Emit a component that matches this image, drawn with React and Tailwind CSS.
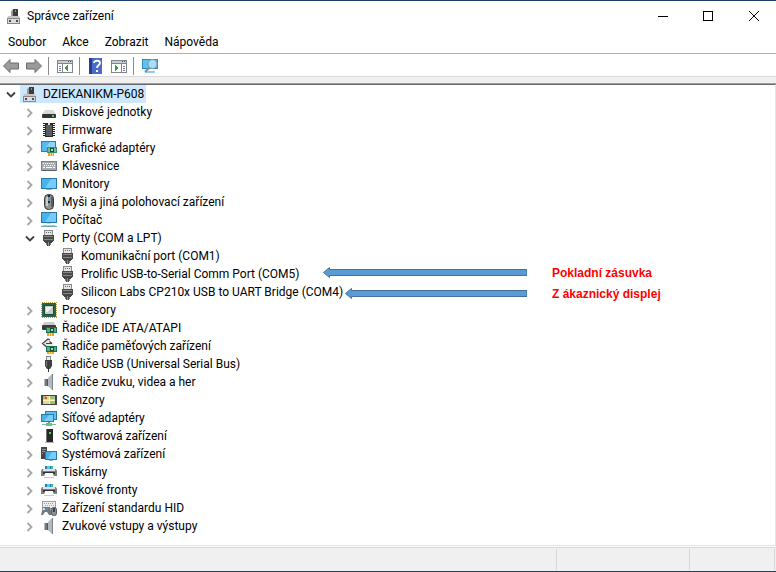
import { useState } from "react";

function Svg({ children, crisp }) {
  return (
    <svg
      width="16"
      height="16"
      viewBox="0 0 16 16"
      className="shrink-0"
      shapeRendering={crisp ? "crispEdges" : "auto"}
      aria-hidden="true"
    >
      {children}
    </svg>
  );
}

function ComputerIcon() {
  return (
    <Svg>
      <path d="M5 3l3-2v8H5z" fill="#9a9a9a" />
      <path d="M7 1h5v8H7z" fill="#3b3b3b" />
      <rect x="9" y="2" width="1" height="2" fill="#35d23c" />
      <path d="M2 8h11l1 3H1z" fill="#c9c6c9" />
      <rect x="1" y="10" width="13" height="6" fill="#8b878b" />
      <rect x="2" y="11" width="11" height="4" fill="#dedcde" />
      <rect x="3" y="12" width="2" height="2" fill="#4c484c" />
      <rect x="10" y="12" width="2" height="2" fill="#4c484c" />
    </Svg>
  );
}

function DiskIcon() {
  return (
    <Svg>
      <path d="M4 6h8l3 4H1z" fill="#d8d8d8" />
      <rect x="1" y="10" width="14" height="4" rx="1" fill="#333" />
      <rect x="11" y="11" width="2" height="2" fill="#35e545" />
    </Svg>
  );
}

function FirmwareIcon() {
  return (
    <Svg crisp>
      <path d="M2 1h12v1H2zM2 3h12v1H2zM2 5h12v1H2zM2 7h12v1H2zM2 9h12v1H2zM2 11h12v1H2zM2 13h12v1H2z" fill="#222" />
      <rect x="4" y="1" width="8" height="14" fill="#2b2b2b" />
      <rect x="5" y="3" width="6" height="11" fill="#5d5d5d" />
      <rect x="7" y="1" width="2" height="2" fill="#ddd" />
    </Svg>
  );
}

function GraphicsIcon() {
  return (
    <Svg>
      <rect x="0" y="1" width="15" height="11" fill="#2383b8" />
      <path d="M1 2h13v9H1z" fill="#55b9f0" />
      <path d="M9 2h5v5H5z" fill="#8bd5fb" />
      <path d="M6 7h10v6H6z" fill="#3c8f6b" />
      <path d="M7 8h8v4H7z" fill="#6dbb96" />
      <path d="M9 8h4v4H9z" fill="#1c4d3b" />
      <rect x="10" y="9" width="2" height="2" fill="#b7d4c6" />
      <path d="M7 13h6v3H7z" fill="#e9a51b" />
      <path d="M9 13h1v3H9zM11 13h1v3h-1z" fill="#f6d27a" />
    </Svg>
  );
}

function KeyboardIcon() {
  return (
    <Svg crisp>
      <rect x="0" y="3" width="16" height="10" fill="#7c8388" />
      <rect x="1" y="4" width="14" height="8" fill="#a5abaf" />
      <path d="M2 5.500h12" stroke="#fff" strokeDasharray="1 1" />
      <path d="M3 7.500h11" stroke="#fff" strokeDasharray="1 1" />
      <path d="M2 9.500h2M5 9.500h6M12 9.500h2" stroke="#fff" />
      <path d="M1 12h14v1H1z" fill="#555c61" />
    </Svg>
  );
}

function MonitorIcon() {
  return (
    <Svg>
      <rect x="0" y="2" width="16" height="11" fill="#2779a7" />
      <rect x="1" y="3" width="14" height="9" fill="#46b3ef" />
      <path d="M10 3h5v9H4z" fill="#78cbf8" />
      <rect x="5" y="13" width="6" height="1" fill="#8eb7ce" />
    </Svg>
  );
}

function MouseIcon() {
  return (
    <Svg>
      <rect x="3.500" y="0.500" width="9" height="15" rx="4" fill="#8d9195" stroke="#34373a" />
      <path d="M5 3h2v9H5z" fill="#c5cacd" />
      <path d="M10 3h2v10h-2z" fill="#5a5e62" />
      <rect x="7" y="1" width="2" height="8" fill="#25282b" />
      <rect x="7" y="3" width="2" height="4" fill="#6b8fb5" />
    </Svg>
  );
}

function PcIcon() {
  return (
    <Svg>
      <rect x="0" y="0" width="16" height="11" fill="#2779a7" />
      <rect x="1" y="1" width="14" height="9" fill="#46b3ef" />
      <path d="M10 1h5v9H4z" fill="#78cbf8" />
      <path d="M6 11h4v1H6z" fill="#b9d9e9" />
      <path d="M2 13h12l2 2H0z" fill="#a9cde0" />
      <path d="M0 14h16v1H0z" fill="#6ba8c8" />
    </Svg>
  );
}

function PortIcon() {
  return (
    <Svg crisp>
      <rect x="3" y="0" width="9" height="5" fill="#8a8a8a" />
      <rect x="4" y="1" width="7" height="4" fill="#e6e6e6" />
      <path d="M5 2h1v1H5zM7 2h1v1H7zM9 2h1v1H9z" fill="#666" />
      <path d="M2 5h11v6H2z" fill="#4a4a4a" />
      <path d="M3 6h9v1H3zM3 9h9v1H3z" fill="#858585" />
      <path d="M3 11h9v1H3zM4 12h7v1H4z" fill="#444" />
      <path d="M5 13h1v2H5zM9 13h1v2H9z" fill="#777" />
      <path d="M6 13h3v3H6z" fill="#4b4b4b" />
      <path d="M7 12h1v4H7z" fill="#8a8a8a" />
    </Svg>
  );
}

function CpuIcon() {
  return (
    <Svg crisp>
      <rect x="1" y="1" width="14" height="14" fill="#2e6247" />
      <rect x="0.500" y="0.500" width="15" height="15" fill="none" stroke="#b99b4c" strokeDasharray="1 1" />
      <rect x="3" y="3" width="10" height="10" fill="#1d4b34" />
      <rect x="4" y="4" width="8" height="8" fill="#c5cdca" />
      <path d="M5 5h6v1h-1v1H9v1H8v1H7v1H5z" fill="#eef1ef" />
    </Svg>
  );
}

function IdeIcon() {
  return (
    <Svg>
      <path d="M3 2h10l2 4H1z" fill="#ccc" />
      <rect x="1" y="5" width="14" height="5" rx="1" fill="#3a3a3a" />
      <path d="M5 7h11v6H5z" fill="#17704c" />
      <path d="M6 8h9v4H6z" fill="#55b08a" />
      <path d="M9 8h4v4H9z" fill="#174b38" />
      <rect x="10" y="9" width="2" height="2" fill="#b7d4c6" />
      <path d="M6 13h7v3H6z" fill="#e9a51b" />
      <path d="M8 13h1v3H8zM10 13h1v3h-1z" fill="#f6d27a" />
    </Svg>
  );
}

function StorageIcon() {
  return (
    <Svg>
      <path d="M6 1l7 5-6 5-6-5z" fill="#e6e6e6" />
      <path d="M9 2L7 1 1.500 5.500 7 10M5 5.500h6M8.500 3.500L11 5.500" fill="none" stroke="#444" strokeWidth="1.200" />
      <path d="M5 8h11v6H5z" fill="#17704c" />
      <path d="M6 9h9v4H6z" fill="#55b08a" />
      <path d="M9 9h4v4H9z" fill="#174b38" />
      <rect x="10" y="10" width="2" height="2" fill="#b7d4c6" />
      <path d="M6 14h7v2H6z" fill="#e9a51b" />
      <path d="M8 14h1v2H8zM10 14h1v2h-1z" fill="#f6d27a" />
    </Svg>
  );
}

function UsbIcon() {
  return (
    <Svg>
      <rect x="5" y="0" width="5" height="5" fill="#888" />
      <rect x="6" y="1" width="3" height="3" fill="#eee" />
      <path d="M4 4h7v6l-2 3H6l-2-3z" fill="#3f3f3f" />
      <path d="M5 5h1v5H5z" fill="#818181" />
      <path d="M7 12h1v4H7z" fill="#333" />
    </Svg>
  );
}

function SpeakerIcon() {
  return (
    <Svg>
      <path d="M3 5h4v7H3z" fill="#6f7a84" />
      <path d="M3 5h1v7H3z" fill="#b4bdc4" />
      <path d="M7 4l4-4v16l-4-4z" fill="#b3b9bd" />
      <path d="M11 0h1v16h-1z" fill="#7d858b" />
      <path d="M6 5h1v7H6z" fill="#4e575f" />
    </Svg>
  );
}

function SensorIcon() {
  return (
    <Svg crisp>
      <rect x="0" y="3" width="16" height="10" fill="#444" />
      <rect x="2" y="4" width="12" height="8" fill="#e8d58a" />
      <path d="M2 4h3v3H2zM9 4h5v3H9zM9 9h5v3H9z" fill="#9bc178" />
      <path d="M2 8h12v1H2zM8 4h1v8H8z" fill="#fff5bd" />
      <rect x="4" y="5" width="2" height="2" fill="#d9532f" />
    </Svg>
  );
}

function NetworkIcon() {
  return (
    <Svg>
      <rect x="4" y="1" width="12" height="9" fill="#277daa" />
      <rect x="5" y="2" width="10" height="7" fill="#5fc0f4" />
      <rect x="0" y="4" width="13" height="8" fill="#277daa" />
      <rect x="1" y="5" width="11" height="6" fill="#47b2ed" />
      <path d="M8 5h4v6H3z" fill="#7acdf8" />
      <path d="M7 12h2v2H7z" fill="#51a872" />
      <path d="M1 14h14v1H1z" fill="#77c292" />
      <rect x="5" y="13" width="6" height="3" fill="#6fbd8b" />
    </Svg>
  );
}

function SoftwareIcon() {
  return (
    <Svg>
      <path d="M5 1h7v13H5z" fill="#282828" />
      <path d="M5 1h1v13H5z" fill="#777" />
      <path d="M4 14h9v1H4z" fill="#b3b3b3" />
      <rect x="8" y="4" width="2" height="2" fill="#40df4c" />
    </Svg>
  );
}

function SystemIcon() {
  return (
    <Svg>
      <rect x="0" y="1" width="6" height="12" fill="#454545" />
      <path d="M1 3h4v1H1zM1 5h4v1H1z" fill="#999" />
      <rect x="1" y="7" width="1" height="1" fill="#41dd4d" />
      <rect x="4" y="5" width="12" height="9" fill="#2779a7" />
      <rect x="5" y="6" width="10" height="7" fill="#46b3ef" />
      <path d="M11 6h4v7H7z" fill="#78cbf8" />
      <path d="M8 14h4v1H8z" fill="#8eb7ce" />
    </Svg>
  );
}

function PrinterIcon() {
  return (
    <Svg>
      <path d="M4 2h8v3H4z" fill="#227eb9" />
      <path d="M6 2h3v3H6z" fill="#56c7f3" />
      <path d="M10 2h2v3h-2z" fill="#42c37b" />
      <path d="M1 5h14l1 2v5H0V7z" fill="#7b8083" />
      <path d="M2 5h12v2H2z" fill="#dfe1e2" />
      <path d="M2 8h12v2H2z" fill="#303335" />
      <path d="M4 9h8l1 5H3z" fill="#fff" />
      <path d="M3 13h10v1H3z" fill="#c9cccd" />
    </Svg>
  );
}

function HidIcon() {
  return (
    <Svg>
      <rect x="1" y="1" width="14" height="8" fill="#9a9fa3" />
      <rect x="2" y="2" width="12" height="6" fill="#eceeef" />
      <path d="M3 3.500h10M4 5.500h9" stroke="#9a9fa3" strokeDasharray="1 1" />
      <path d="M2 7h7l2 8H8l-2-3H4l-2 3H0z" fill="#74797d" />
      <rect x="2" y="8" width="2" height="2" fill="#d9dee1" />
      <rect x="5" y="8" width="2" height="2" fill="#3c9bd6" />
      <rect x="10.500" y="7.500" width="5" height="8" rx="2" fill="#8c9195" stroke="#555a5e" />
      <rect x="12" y="8" width="2" height="4" fill="#3b3f43" />
    </Svg>
  );
}

const devices = [
  { name: "Diskové jednotky", icon: DiskIcon },
  { name: "Firmware", icon: FirmwareIcon },
  { name: "Grafické adaptéry", icon: GraphicsIcon },
  { name: "Klávesnice", icon: KeyboardIcon },
  { name: "Monitory", icon: MonitorIcon },
  { name: "Myši a jiná polohovací zařízení", icon: MouseIcon },
  { name: "Počítač", icon: PcIcon },
  {
    name: "Porty (COM a LPT)",
    icon: PortIcon,
    children: [
      "Komunikační port (COM1)",
      "Prolific USB-to-Serial Comm Port (COM5)",
      "Silicon Labs CP210x USB to UART Bridge (COM4)",
    ],
  },
  { name: "Procesory", icon: CpuIcon },
  { name: "Řadiče IDE ATA/ATAPI", icon: IdeIcon },
  { name: "Řadiče paměťových zařízení", icon: StorageIcon },
  { name: "Řadiče USB (Universal Serial Bus)", icon: UsbIcon },
  { name: "Řadiče zvuku, videa a her", icon: SpeakerIcon },
  { name: "Senzory", icon: SensorIcon },
  { name: "Síťové adaptéry", icon: NetworkIcon },
  { name: "Softwarová zařízení", icon: SoftwareIcon },
  { name: "Systémová zařízení", icon: SystemIcon },
  { name: "Tiskárny", icon: PrinterIcon },
  { name: "Tiskové fronty", icon: PrinterIcon },
  { name: "Zařízení standardu HID", icon: HidIcon },
  { name: "Zvukové vstupy a výstupy", icon: SpeakerIcon },
];

function Chevron({ open, label, onClick }) {
  return (
    <button
      onClick={onClick}
      aria-label={label}
      aria-expanded={open}
      className="w-4 h-[18px] pt-[2px] flex items-center justify-center shrink-0"
    >
      <svg width="10" height="10" viewBox="0 0 10 10" fill="none" strokeWidth="1.8" aria-hidden="true">
        {open ? (
          <path d="M1 2.500l4 4 4-4" stroke="#404040" />
        ) : (
          <path d="M2.500 1l4 4-4 4" stroke="#a6a6a6" />
        )}
      </svg>
    </button>
  );
}

function TitleBar() {
  return (
    <header className="flex items-center h-[30px] pl-[6px]">
      <ComputerIcon />
      <h1 className="ml-[5px] flex-1">Správce zařízení</h1>
      <button aria-label="Minimalizovat" className="w-[45px] h-full flex items-center justify-center">
        <svg width="10" height="11" shapeRendering="crispEdges"><path d="M0 5h10v1H0z" /></svg>
      </button>
      <button aria-label="Maximalizovat" className="w-[46px] h-full flex items-center justify-center">
        <svg width="10" height="10" shapeRendering="crispEdges">
          <path d="M.5.5h9v9h-9z" fill="none" stroke="#000" />
        </svg>
      </button>
      <button aria-label="Zavřít" className="w-[45px] h-full flex items-center justify-center">
        <svg width="10" height="10"><path d="M0 0l10 10M10 0L0 10" stroke="#000" /></svg>
      </button>
    </header>
  );
}

function Separator() {
  return <div className="w-px h-[18px] bg-[#8c8c8c] shrink-0" />;
}

function ArrowIcon({ flip }) {
  return (
    <Svg>
      <path
        d={flip ? "M15.500 8L9 1.500V5H.5v6H9v3.500z" : "M.5 8L7 1.500V5h8.500v6H7v3.500z"}
        fill="#9b9b9b"
        stroke="#6b6b6b"
      />
    </Svg>
  );
}

function PaneIcon({ flip }) {
  return (
    <Svg crisp>
      <rect x="0" y="2" width="16" height="13" fill="#80868b" />
      <rect x="1" y="3" width="14" height="2" fill="#c7cdd2" />
      <path d="M11 3h1v1h-1zM13 3h1v1h-1z" fill="#555" />
      <rect x="1" y="6" width="14" height="8" fill="#fff" />
      {flip ? (
        <>
          <path d="M10 6h1v8h-1z" fill="#80868b" />
          <path d="M12 8h2v1h-2zM12 10h2v1h-2zM12 12h2v1h-2z" fill="#6f7880" />
          <path d="M4 7l4 3-4 3z" fill="#2ca52f" />
        </>
      ) : (
        <>
          <path d="M5 6h1v8H5z" fill="#80868b" />
          <path d="M2 8h2v1H2zM2 10h2v1H2zM2 12h2v1H2z" fill="#6f7880" />
          <path d="M11 7l-4 3 4 3z" fill="#2ca52f" />
        </>
      )}
    </Svg>
  );
}

function HelpIcon() {
  return (
    <Svg>
      <rect x="1" y="0" width="13" height="16" fill="#4a6cc6" />
      <rect x="1" y="0" width="3" height="16" fill="#223f91" />
      <path d="M6 5c0-3 6-3 6 0 0 2-3 2-3 5" fill="none" stroke="#fff" strokeWidth="1.800" />
      <rect x="8" y="12" width="2" height="2" fill="#fff" />
    </Svg>
  );
}

function ScanIcon() {
  return (
    <Svg>
      <rect x="0" y="1" width="16" height="10" fill="#2b8cc0" />
      <rect x="1" y="2" width="14" height="8" fill="#5fc0f2" />
      <path d="M3 13h10v2H3z" fill="#9cc9e0" />
      <path d="M8 9l-5 5" stroke="#6f95ab" strokeWidth="2" />
      <circle cx="10.500" cy="6" r="4.500" fill="#a9ddf8" stroke="#7d98a8" />
    </Svg>
  );
}

function Toolbar() {
  return (
    <div className="flex items-center h-[22px] pt-[2px] pl-[3px]">
      <button aria-label="Zpět"><ArrowIcon /></button>
      <button aria-label="Vpřed" className="ml-[7px] mr-[6px]"><ArrowIcon flip /></button>
      <Separator />
      <button aria-label="Strom konzoly" className="ml-2 mr-[6px]"><PaneIcon /></button>
      <Separator />
      <button aria-label="Nápověda" className="ml-2"><HelpIcon /></button>
      <button aria-label="Podokno akcí" className="ml-[7px] mr-[6px]"><PaneIcon flip /></button>
      <Separator />
      <button aria-label="Vyhledat změny hardwaru" className="ml-2"><ScanIcon /></button>
    </div>
  );
}

function Note({ width, children }) {
  return (
    <div className="flex items-center h-[21px]">
      <div className="w-[204px] flex justify-end">
        <svg width={width} height="11" aria-hidden="true">
          <path
            d={`M.5 5.500l6-5v2H${width}v6H6.500v2z`}
            fill="#5b9bd5"
            stroke="#41719c"
          />
        </svg>
      </div>
      <p className="ml-[25px] font-['Liberation_Sans',sans-serif] font-bold text-[12px] text-[#ff0000]">
        {children}
      </p>
    </div>
  );
}

function DeviceTree() {
  const [rootOpen, setRootOpen] = useState(true);
  const [open, setOpen] = useState(["Porty (COM a LPT)"]);

  const toggle = (name) => {
    setOpen((prev) =>
      prev.includes(name) ? prev.filter((n) => n !== name) : [...prev, name]
    );
  };

  return (
    <main className="relative flex-1 border-t border-t-[#696969] border-r border-r-[#e3e3e3] border-b border-b-[#e3e3e3]">
      <div className="flex items-center h-[18px] pl-[3px]">
        <Chevron open={rootOpen} label="DZIEKANIKM-P608" onClick={() => setRootOpen(!rootOpen)} />
        <div className="flex items-center h-[18px] ml-px pl-[2px] pr-[2px] gap-[5px] bg-[#cce8ff]">
          <ComputerIcon />
          DZIEKANIKM-P608
        </div>
      </div>

      {rootOpen && (
        <ul>
          {devices.map(({ name, icon: Icon, children }) => (
            <li key={name}>
              <div className="flex items-center h-[18px] pl-[22px]">
                <Chevron open={open.includes(name)} label={name} onClick={() => toggle(name)} />
                <div className="flex items-center ml-[3px] gap-[5px]">
                  <Icon />
                  {name}
                </div>
              </div>
              {children && open.includes(name) && (
                <ul>
                  {children.map((child) => (
                    <li key={child} className="flex items-center h-[18px] pl-[60px] gap-[5px]">
                      <PortIcon />
                      {child}
                    </li>
                  ))}
                </ul>
              )}
            </li>
          ))}
        </ul>
      )}

      {/* callouts over the COM ports */}
      <div className="absolute left-[323px] top-[177px]">
        <Note width={204}>Pokladní zásuvka</Note>
        <Note width={182}>Z ákaznický displej</Note>
      </div>
    </main>
  );
}

function App() {
  return (
    <div className="min-h-screen flex flex-col bg-white text-black font-['Roboto','Open_Sans',sans-serif] text-[12px] leading-[18px] whitespace-nowrap border-t border-t-[#1b4068] border-b border-b-[#1c4462]">
      <TitleBar />
      <nav className="flex items-center gap-4 h-[22px] pl-2">
        <button>Soubor</button>
        <button>Akce</button>
        <button>Zobrazit</button>
        <button>Nápověda</button>
      </nav>
      <div className="border-t border-t-[#abacb5]">
        <Toolbar />
      </div>
      <div className="h-2 bg-[#f0f0f0] border-t border-t-[#d9d9d9] border-b border-b-[#a0a0a0]" />
      <DeviceTree />
      <footer className="mt-px h-6 flex justify-end bg-[#f0f0f0] border-t border-t-[#d7d7d7] py-px pr-px">
        <div className="w-[133px] border-l border-l-[#d7d7d7]" />
        <div className="w-[86px] border-l border-r border-[#d7d7d7]" />
      </footer>
    </div>
  );
}

export default App;
